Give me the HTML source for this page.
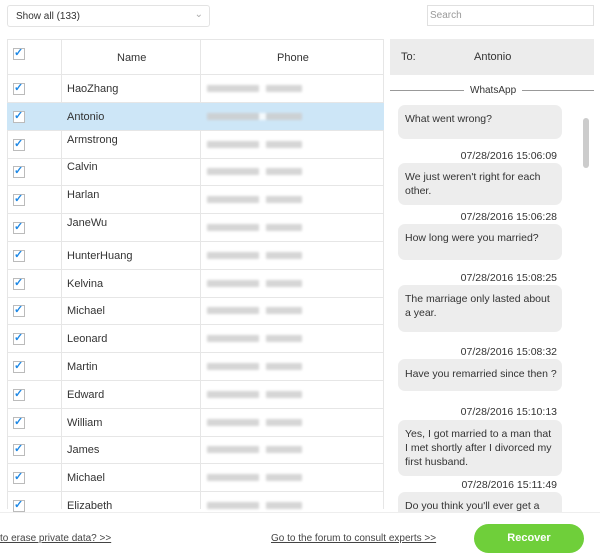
<!DOCTYPE html><html><head><style>
body{margin:0;width:600px;height:556px;overflow:hidden;background:#fff;font-family:"Liberation Sans",sans-serif;font-size:11px;color:#333;position:relative}
.a{position:absolute}
.sel{left:7px;top:5px;width:203px;height:22px;border:1px solid #e3e3e3;border-radius:3px;box-sizing:border-box;padding:5px 8px;font-size:10px}
.cb{position:absolute;left:6px;width:10px;height:10px;border:1px solid #bbb;background:#fff;color:#1e88e5;font-size:11px;line-height:9px;font-weight:bold}
.row{position:absolute;left:7px;width:377px;height:28px;border-bottom:1px solid #e6e6e6;box-sizing:border-box}
.row .n{position:absolute;left:60px;top:8px}
.row .p{position:absolute;left:200px;top:10px;width:95px;height:7px;background:linear-gradient(90deg,#ccc 0 55%,#fff 55% 62%,#ccc 62%);filter:blur(1.2px);opacity:.8}
.bub{position:absolute;left:398px;width:164px;background:#ededed;border-radius:7px;box-sizing:border-box;padding:7px;font-size:10.5px;line-height:14px}
.ts{position:absolute;right:43px;font-size:10.5px}
</style></head><body>
<div class="a sel">Show all (133)<span style="position:absolute;right:6px;top:3px;color:#aaa">&#8964;</span></div>
<div class="a" style="left:427px;top:5px;width:167px;height:21px;border:1px solid #e0e0e0;box-sizing:border-box;color:#999;font-size:10px;padding:4px 2px">Search</div>
<div class="a" style="left:7px;top:39px;width:377px;height:470px;border:1px solid #e6e6e6;border-bottom:none;box-sizing:border-box"></div>
<div class="a" style="left:61px;top:39px;width:1px;height:470px;background:#e6e6e6"></div>
<div class="a" style="left:200px;top:39px;width:1px;height:470px;background:#e6e6e6"></div>
<div class="row" style="top:39px;height:36px;background:transparent"><div class="cb" style="top:9px">✓</div><span class="a" style="left:110px;top:13px">Name</span><span class="a" style="left:270px;top:13px">Phone</span></div>
<div id="rows"></div>
<script>
var n=["HaoZhang","Antonio","Armstrong","Calvin","Harlan","JaneWu","HunterHuang","Kelvina","Michael","Leonard","Martin","Edward","William","James","Michael","Elizabeth"];
var h="";n.forEach(function(s,i){var t=75+i*27.8;var off=(i>=2&&i<=5)?-5:0;
h+='<div class="row" style="top:'+t+'px;'+(i==1?'background:#cde6f7;':'')+'"><div class="cb" style="top:8px">✓</div><span class="n" style="top:'+(8+off)+'px">'+s+'</span><div class="p"></div></div>';});
document.getElementById("rows").innerHTML=h;
</script>
<div class="a" style="left:390px;top:39px;width:204px;height:36px;background:#ececec"><span class="a" style="left:11px;top:12px">To:</span><span class="a" style="left:84px;top:12px">Antonio</span></div>
<div class="a" style="left:390px;top:90px;width:74px;height:1px;background:#999"></div>
<div class="a" style="left:522px;top:90px;width:72px;height:1px;background:#999"></div>
<div class="a" style="left:470px;top:85px;font-size:10px">WhatsApp</div>
<div class="a" style="left:583px;top:118px;width:6px;height:50px;background:#ccc;border-radius:3px"></div>
<div class="bub" style="top:105px;height:34px;padding-top:7px">What went wrong?</div>
<div class="ts" style="top:150px">07/28/2016 15:06:09</div>
<div class="bub" style="top:163px">We just weren't right for each other.</div>
<div class="ts" style="top:211px">07/28/2016 15:06:28</div>
<div class="bub" style="top:224px;height:36px;padding-top:7px">How long were you married?</div>
<div class="ts" style="top:272px">07/28/2016 15:08:25</div>
<div class="bub" style="top:285px;height:47px">The marriage only lasted about a year.</div>
<div class="ts" style="top:346px">07/28/2016 15:08:32</div>
<div class="bub" style="top:359px;height:32px;white-space:nowrap;padding-top:8px">Have you remarried since then ?</div>
<div class="ts" style="top:406px">07/28/2016 15:10:13</div>
<div class="bub" style="top:420px">Yes, I got married to a man that I met shortly after I divorced my first husband.</div>
<div class="ts" style="top:479px">07/28/2016 15:11:49</div>
<div class="bub" style="top:492px;height:40px">Do you think you'll ever get a</div>
<div class="a" style="left:0;top:512px;width:600px;height:44px;background:#fff;border-top:1px solid #eee"></div>
<div class="a" style="left:0;top:533px;font-size:10px;text-decoration:underline;color:#444">to erase private data? &gt;&gt;</div>
<div class="a" style="left:271px;top:533px;font-size:10px;text-decoration:underline;color:#444">Go to the forum to consult experts &gt;&gt;</div>
<div class="a" style="left:474px;top:524px;width:110px;height:29px;background:#6fcf3a;border-radius:15px;color:#fff;font-weight:bold;font-size:11px;text-align:center;line-height:29px">Recover</div>
</body></html>
